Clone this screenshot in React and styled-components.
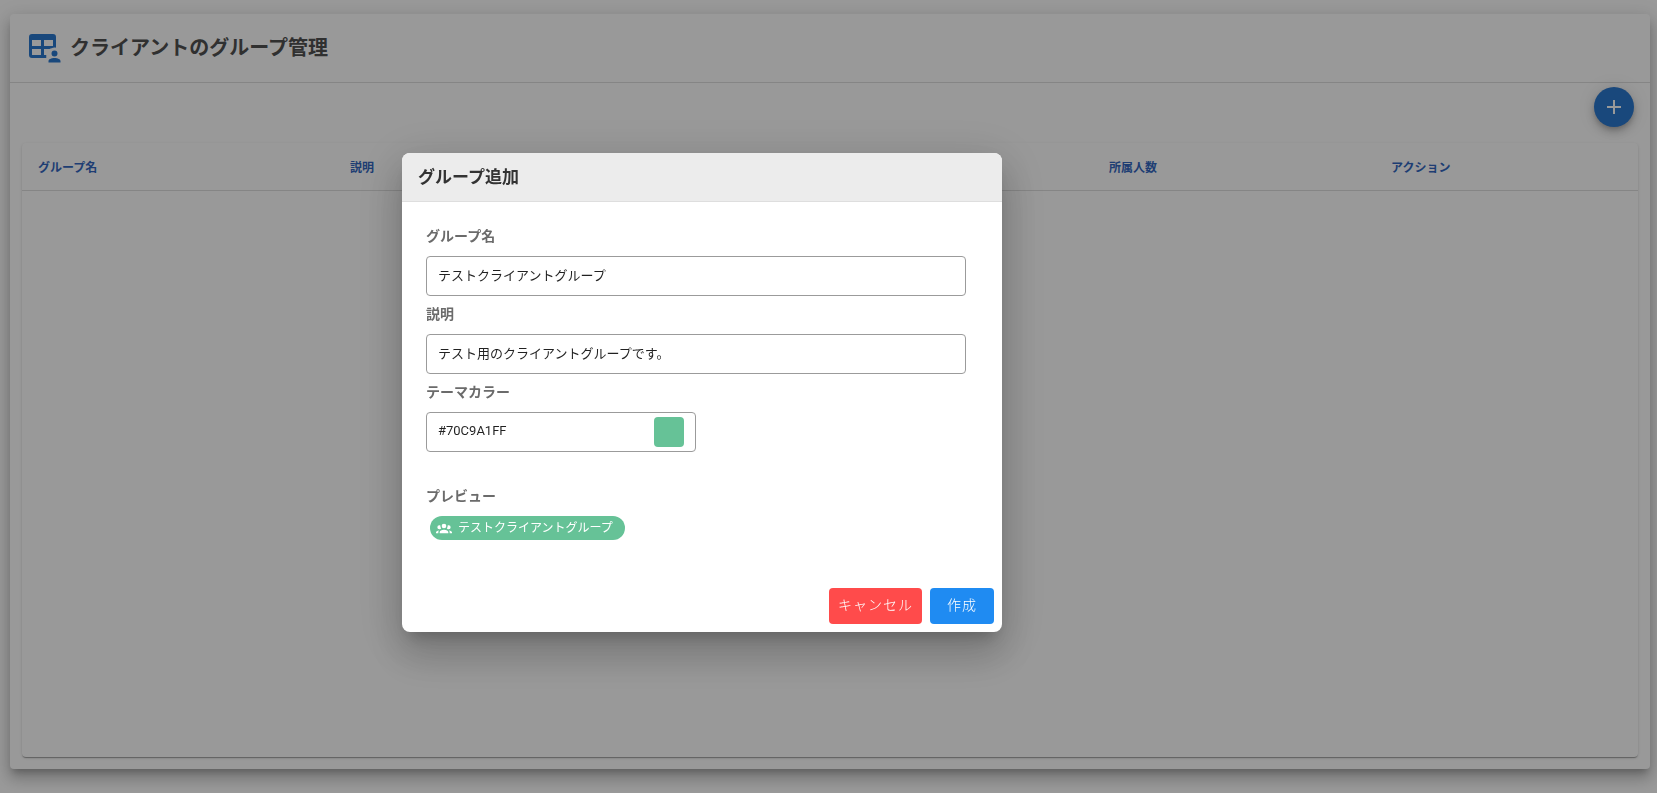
import React, { useState } from 'react';
import styled, { createGlobalStyle } from 'styled-components';

const GlobalStyle = createGlobalStyle`
  * {
    box-sizing: border-box;
  }
  body {
    margin: 0;
    background: #fff;
    color: rgba(0, 0, 0, 0.87);
    font-family: Roboto, 'Noto Sans CJK JP', sans-serif;
  }
`;

const Page = styled.main`
  min-height: 100vh;
  padding: 14px 7px 24px 10px;
  display: flex;
  overflow: hidden;
`;

const Card = styled.section`
  flex: 1;
  display: flex;
  flex-direction: column;
  border-radius: 4px;
  background: #fff;
  box-shadow: 0 6px 6px -3px rgba(0, 0, 0, 0.2),
    0 10px 14px 1px rgba(0, 0, 0, 0.14), 0 4px 18px 3px rgba(0, 0, 0, 0.12);
`;

const CardHeader = styled.header`
  height: 69px;
  display: flex;
  align-items: center;
  gap: 8px;
  padding: 0 16px 4px;
  border-bottom: 1px solid #dedede;
`;

const CardTitle = styled.h1`
  margin: 0;
  padding-top: 4px;
  font-size: 20px;
  line-height: 32px;
  font-weight: 700;
  color: #505050;
`;

const Toolbar = styled.div`
  display: flex;
  justify-content: flex-end;
  padding: 4px 16px 16px;
`;

const AddButton = styled.button`
  width: 40px;
  height: 40px;
  padding: 0;
  display: flex;
  align-items: center;
  justify-content: center;
  border: 0;
  border-radius: 50%;
  background: #2b78cf;
  color: #fff;
  cursor: pointer;
  box-shadow: 0 3px 5px -1px rgba(0, 0, 0, 0.2),
    0 6px 10px 0 rgba(0, 0, 0, 0.14), 0 1px 18px 0 rgba(0, 0, 0, 0.12);
`;

const TableWrapper = styled.div`
  flex: 1;
  margin: 0 12px 12px;
  border-radius: 4px;
  box-shadow: 0 2px 1px -1px rgba(0, 0, 0, 0.2),
    0 1px 1px 0 rgba(0, 0, 0, 0.14), 0 1px 3px 0 rgba(0, 0, 0, 0.12);
`;

const Table = styled.table`
  width: 100%;
  border-spacing: 0;
  table-layout: fixed;
`;

const HeadCell = styled.th`
  width: ${props => props.$width};
  height: 48px;
  padding: 0 16px 1px;
  border-bottom: 1px solid #dedede;
  text-align: left;
  font-size: 12px;
  font-weight: 700;
  color: #3367c0;
`;

const Overlay = styled.div`
  position: fixed;
  inset: 0;
  display: flex;
  align-items: center;
  justify-content: center;
  padding-bottom: 8px;
  background: rgba(0, 0, 0, 0.4);
`;

const Dialog = styled.form`
  width: 600px;
  max-width: 90%;
  margin-right: 253px;
  border-radius: 8px;
  overflow: hidden;
  background: #fff;
  box-shadow: 0 11px 15px -7px rgba(0, 0, 0, 0.2),
    0 24px 38px 3px rgba(0, 0, 0, 0.14), 0 9px 46px 8px rgba(0, 0, 0, 0.12);
`;

const DialogTitle = styled.h2`
  height: 49px;
  margin: 0;
  padding: 0 16px;
  border-bottom: 1px solid #dedede;
  background: #ececec;
  font-size: 17px;
  line-height: 48px;
  font-weight: 700;
  color: #333;
`;

const DialogBody = styled.div`
  padding: 24px 36px 48px 24px;
`;

const Field = styled.div`
  width: ${props => (props.$half ? '50%' : '100%')};
  margin-bottom: ${props => (props.$last ? '34px' : '8px')};
`;

const Label = styled.label`
  display: block;
  padding-bottom: 10px;
  font-size: 14px;
  line-height: 20px;
  font-weight: 700;
  color: #6b6b6b;
`;

const InputBox = styled.div`
  height: 40px;
  display: flex;
  align-items: center;
  padding: 0 11px;
  border: 1px solid #9b9b9b;
  border-radius: 4px;
`;

const Input = styled.input`
  flex: 1;
  min-width: 0;
  padding: 0 0 4px;
  border: 0;
  outline: 0;
  background: transparent;
  font: inherit;
  font-size: 13px;
  color: rgba(0, 0, 0, 0.87);
`;

const Swatch = styled.button`
  width: 30px;
  height: 30px;
  padding: 0;
  border: 0;
  border-radius: 4px;
  background: #66c297;
  cursor: pointer;
`;

const Chip = styled.div`
  width: fit-content;
  height: 24px;
  margin-left: 4px;
  padding: 0 12px 0 6px;
  display: flex;
  align-items: center;
  gap: 6px;
  border-radius: 12px;
  background: #66c297;
  color: #fff;
  font-size: 12px;
  line-height: 22px;
`;

const Actions = styled.footer`
  display: flex;
  justify-content: flex-end;
  gap: 8px;
  padding: 0 8px 8px;
`;

const ActionButton = styled.button`
  min-width: 64px;
  height: 36px;
  padding: 0 9px 4px;
  border: 0;
  border-radius: 4px;
  background: ${props => (props.$danger ? '#ff4b4b' : '#1f8bf2')};
  color: #fff;
  font: inherit;
  font-size: 14px;
  font-weight: 300;
  letter-spacing: 1px;
  cursor: pointer;
`;

const TableAccountIcon = () => (
  <svg width='36' height='36' viewBox='0 0 24 24' fill='#2b78cf' aria-hidden='true'>
    <path d='M4 4H18A2 2 0 0 1 20 6V13.09C19.67 13.03 19.34 13 19 13A4 4 0 0 0 18 13.1V8H12V12H18V13.13C16.8 13.5 15.8 14 15.2 14H12V18H13.5V20H4A2 2 0 0 1 2 18V6A2 2 0 0 1 4 4M4 8V12H10V8H4M4 14V18H10V14H4' fillRule='evenodd' />
    <path d='M15 23V22C15 20.9 16.79 20 19 20S23 20.9 23 22V23H15M19 15A2 2 0 1 1 19 19A2 2 0 0 1 19 15' />
  </svg>
);

const PlusIcon = () => (
  <svg width='24' height='24' viewBox='0 0 24 24' fill='currentColor' aria-hidden='true'>
    <path d='M19 13H13V19H11V13H5V11H11V5H13V11H19V13Z' />
  </svg>
);

const GroupIcon = () => (
  <svg width='16' height='16' viewBox='0 0 24 24' fill='currentColor' aria-hidden='true'>
    <path d='M12,5.5A3.5,3.5 0 0,1 15.5,9A3.5,3.5 0 0,1 12,12.5A3.5,3.5 0 0,1 8.5,9A3.5,3.5 0 0,1 12,5.5M5,8C5.56,8 6.08,8.15 6.53,8.42C6.38,9.85 6.8,11.27 7.66,12.38C7.16,13.34 6.16,14 5,14A3,3 0 0,1 2,11A3,3 0 0,1 5,8M19,8A3,3 0 0,1 22,11A3,3 0 0,1 19,14C17.84,14 16.84,13.34 16.34,12.38C17.2,11.27 17.62,9.85 17.47,8.42C17.92,8.15 18.44,8 19,8M5.5,18.25C5.5,16.18 8.41,14.5 12,14.5C15.59,14.5 18.5,16.18 18.5,18.25V20H5.5V18.25M0,20V18.5C0,17.11 1.89,15.94 4.45,15.6C3.86,16.28 3.5,17.22 3.5,18.25V20H0M24,20H20.5V18.25C20.5,17.22 20.14,16.28 19.55,15.6C22.11,15.94 24,17.11 24,18.5V20Z' />
  </svg>
);

const columns = [
  { title: 'グループ名', width: '312px' },
  { title: '説明', width: 'auto' },
  { title: '所属人数', width: '282px' },
  { title: 'アクション', width: '263px' }
];

const App = () => {
  const [name, setName] = useState('テストクライアントグループ');
  const [description, setDescription] = useState(
    'テスト用のクライアントグループです。'
  );
  const [color, setColor] = useState('#70C9A1FF');

  return (
    <>
      <GlobalStyle />
      <Page>
        <Card>
          <CardHeader>
            <TableAccountIcon />
            <CardTitle>クライアントのグループ管理</CardTitle>
          </CardHeader>
          <Toolbar>
            <AddButton type='button' aria-label='グループ追加'>
              <PlusIcon />
            </AddButton>
          </Toolbar>
          <TableWrapper>
            <Table>
              <thead>
                <tr>
                  {columns.map(column => (
                    <HeadCell key={column.title} $width={column.width}>
                      {column.title}
                    </HeadCell>
                  ))}
                </tr>
              </thead>
            </Table>
          </TableWrapper>
        </Card>
      </Page>

      <Overlay>
        <Dialog
          role='dialog'
          aria-labelledby='dialog-title'
          onSubmit={e => e.preventDefault()}
        >
          <DialogTitle id='dialog-title'>グループ追加</DialogTitle>
          <DialogBody>
            <Field>
              <Label htmlFor='name'>グループ名</Label>
              <InputBox>
                <Input
                  id='name'
                  value={name}
                  onChange={e => setName(e.target.value)}
                />
              </InputBox>
            </Field>
            <Field>
              <Label htmlFor='description'>説明</Label>
              <InputBox>
                <Input
                  id='description'
                  value={description}
                  onChange={e => setDescription(e.target.value)}
                />
              </InputBox>
            </Field>
            <Field $half $last>
              <Label htmlFor='color'>テーマカラー</Label>
              <InputBox>
                <Input
                  id='color'
                  value={color}
                  onChange={e => setColor(e.target.value)}
                />
                <Swatch type='button' aria-label='テーマカラー' />
              </InputBox>
            </Field>
            <Label as='div'>プレビュー</Label>
            <Chip>
              <GroupIcon />
              {name}
            </Chip>
          </DialogBody>
          <Actions>
            <ActionButton type='button' $danger>
              キャンセル
            </ActionButton>
            <ActionButton type='submit'>作成</ActionButton>
          </Actions>
        </Dialog>
      </Overlay>
    </>
  );
};

export default App;
